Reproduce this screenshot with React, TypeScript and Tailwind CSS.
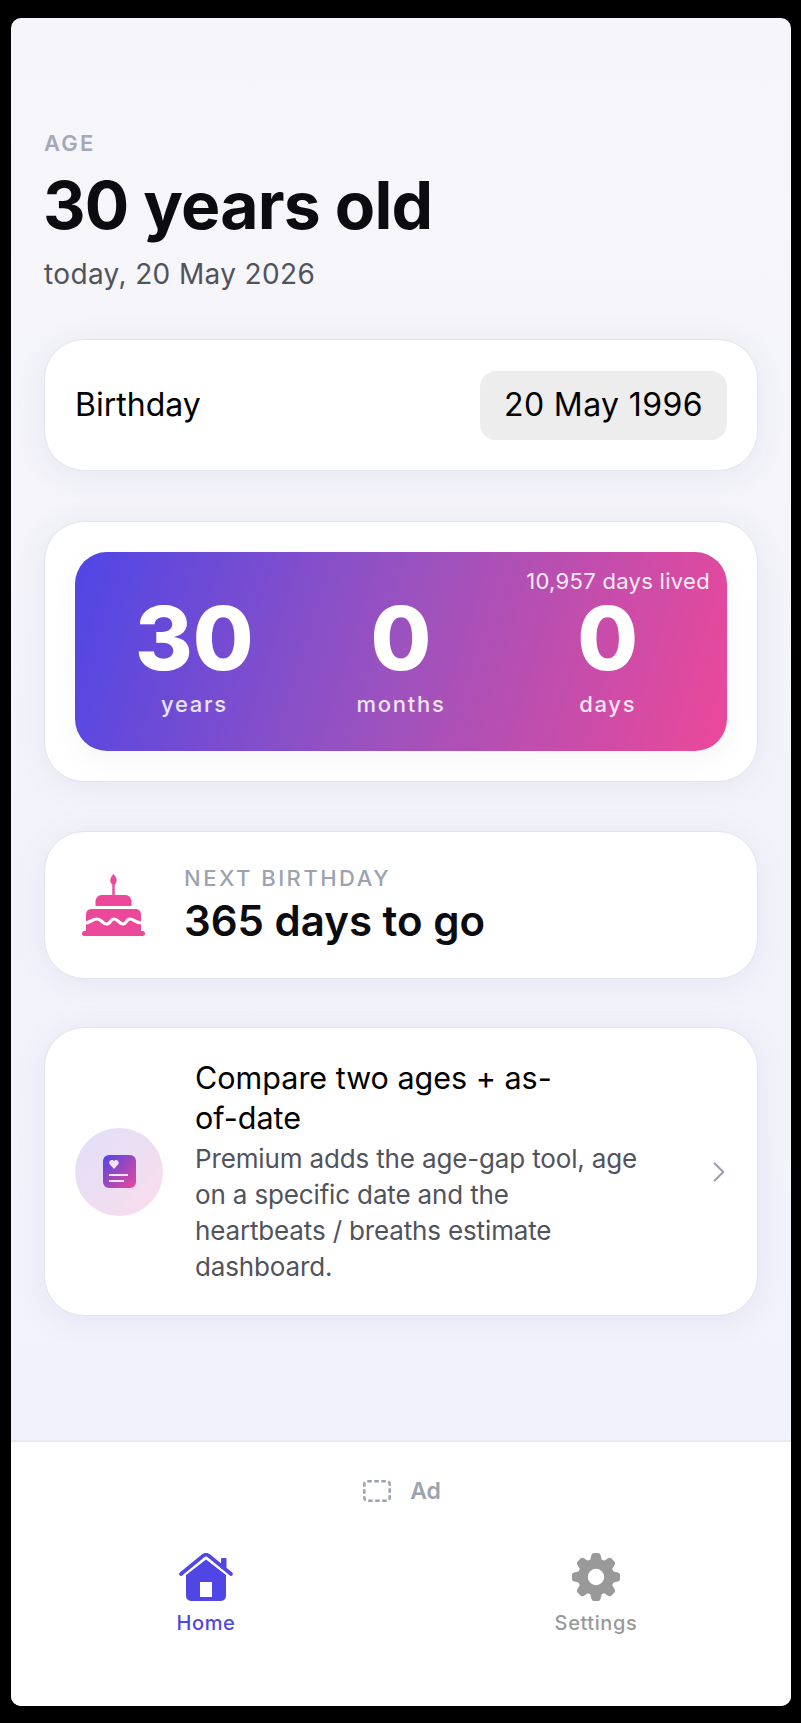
import React from "react";
import { ChevronRight } from "lucide-react";

function CakeIcon() {
  return (
    <svg width="63" height="62" viewBox="0 0 63 62" fill="#ec4899">
      <path d="M31.500 0c1.800 2 3.200 4 3.200 6.500 0 1.900-.8 3.200-2 3.700V21h-2.400V10.200c-1.200-.5-2-1.800-2-3.700C28.300 4 29.700 2 31.500 0z" />
      <path d="M13.500 32v-4c0-4 2.500-7 6-7h24c3.500 0 6 3 6 7v4z" />
      <path d="M4 58V41c0-4 2-6 6-6h43c4 0 6 2 6 6v17z" />
      <rect x="0" y="57" width="63" height="5" rx="2.500" />
      <path d="M3 49C8 49 10 45 15 45S20 50 24.500 50 28 45 32 45 37 50 41 50 44 45 48 45 53 49 60 49" fill="none" stroke="#ffffff" strokeWidth="3.200" />
    </svg>
  );
}

function HomeIcon() {
  return (
    <svg width="54" height="48" viewBox="0 0 54 48" fill="#4f46e5">
      <path d="M2 21 24.500 2.500Q27 .8 29.500 2.500L52 21" fill="none" stroke="#4f46e5" strokeWidth="3.600" strokeLinecap="round" />
      <rect x="42" y="5" width="5.500" height="11" rx="1" />
      <path fillRule="evenodd" d="M7 22 27 6.500 47 22V43a5 5 0 0 1-5 5H12a5 5 0 0 1-5-5zM21 29V44H33V29z" />
    </svg>
  );
}

function GearIcon() {
  return (
    <svg width="48" height="48" viewBox="0 0 24 24" fill="#999999">
      <circle cx="12" cy="12" r="6.600" fill="none" stroke="#999999" strokeWidth="5" />
      {[0, 45, 90, 135, 180, 225, 270, 315].map((a) => (
        <path key={a} transform={`rotate(${a} 12 12)`} d="M8.800 5 9.700 1.100Q9.900 0 11 0H13Q14.100 0 14.300 1.100L15.200 5z" />
      ))}
    </svg>
  );
}

export default function App() {
  return (
    <div className="h-[1723px] bg-black pt-[18px] pb-[17px] pl-[11px] pr-[10px] font-['Inter','Liberation_Sans',sans-serif]">
      <div className="h-full rounded-[10px] overflow-hidden flex flex-col bg-[linear-gradient(180deg,#f6f6fa,#f0f1fc)]">
        {/* 메인 */}
        <div className="flex-1 px-[33px] pt-[113px]">
          <div className="text-[22px] leading-[24px] tracking-[2.200px] font-semibold text-[#a3a9b5]">AGE</div>
          <h1 className="mt-[9px] -ml-[1px] text-[66px] leading-[82px] font-bold tracking-[-0.8px] text-[#0b0b10]">30 years old</h1>
          <p className="mt-[10px] text-[28px] leading-[36px] tracking-[0.370px] text-[#51535c]">today, 20 May 2026</p>

          <div className="mt-[47px] h-[132px] rounded-[40px] bg-white border border-[#e4e4ec] shadow-[0_4px_32px_rgba(60,60,120,0.08)] flex items-center justify-between px-[30px]">
            <span className="text-[32px] text-black">Birthday</span>
            <span className="h-[69px] w-[247px] rounded-[16px] bg-[#ededed] flex items-center justify-center text-[32px] tracking-[0.400px] text-black">20 May 1996</span>
          </div>

          <div className="mt-[50px] h-[261px] rounded-[40px] bg-white border border-[#e4e4ec] shadow-[0_4px_32px_rgba(60,60,120,0.08)] pt-[30px] px-[30px]">
            <div className="relative h-[199px] rounded-[32px] bg-[linear-gradient(107deg,#4f46e5,#9c52be_50%,#ec4899)] flex items-start pt-[42px] px-[16px] shadow-[0_10px_30px_rgba(0,0,0,0.04)]">
              <span className="absolute right-[17px] top-[16px] text-[22px] leading-[26px] tracking-[0.300px] text-white/90">10,957 days lived</span>
              {[
                ["30", "years"],
                ["0", "months"],
                ["0", "days"],
              ].map(([n, l]) => (
                <div key={l} className="flex-1 flex flex-col items-center text-white">
                  <span className="text-[88px] leading-[88px] font-extrabold">{n}</span>
                  <span className="mt-[8px] text-[22px] leading-[28px] font-medium tracking-[1.700px] text-white/85">{l}</span>
                </div>
              ))}
            </div>
          </div>

          <div className="mt-[49px] h-[148px] rounded-[40px] bg-white border border-[#e4e4ec] shadow-[0_4px_32px_rgba(60,60,120,0.08)] flex items-center pl-[37px]">
            <CakeIcon />
            <div className="ml-[39px]">
              <div className="text-[22px] leading-[28px] font-medium tracking-[2.500px] text-[#9ca3af]">NEXT BIRTHDAY</div>
              <div className="mt-[4px] text-[42px] leading-[50px] font-semibold text-[#0b0b10]">365 days to go</div>
            </div>
          </div>

          <div className="mt-[48px] h-[289px] rounded-[40px] bg-white border border-[#e4e4ec] shadow-[0_4px_32px_rgba(60,60,120,0.08)] flex items-center pl-[30px] pr-[21px]">
            <div className="w-[88px] h-[88px] rounded-full bg-[linear-gradient(135deg,#e0e0f9,#fadcec)] flex items-center justify-center shrink-0">
              <div className="w-[33px] h-[33px] rounded-[6px] bg-[linear-gradient(135deg,#4f46e5,#ec4899)] flex flex-col items-start pt-[5px] pl-[6px]">
                <svg width="10" height="9" viewBox="0 0 24 22" fill="#f3e3f5">
                  <path d="M12 22 2 11C-2 5 2 0 7 0c2 0 4 1 5 3 1-2 3-3 5-3 5 0 9 5 5 11z" />
                </svg>
                <div className="w-[19px] h-[2px] bg-[#f3e3f5] mt-[5px]" />
                <div className="w-[15px] h-[2px] bg-[#f3e3f5] mt-[4px]" />
              </div>
            </div>
            <div className="ml-[32px] flex-1">
              <div className="text-[30.500px] leading-[40px] text-black">
                Compare two ages + as-
                <br />
                of-date
              </div>
              <p className="mt-[3px] text-[26px] leading-[35.800px] tracking-[-0.150px] text-[#51535c]">
                Premium adds the age-gap tool, age
                <br />
                on a specific date and the
                <br />
                heartbeats / breaths estimate
                <br />
                dashboard.
              </p>
            </div>
            <ChevronRight size={34} strokeWidth={1.600} className="text-[#9ca3af]" />
          </div>
        </div>

        {/* 하단 영역 */}
        <div className="h-[266px] shrink-0 bg-white border-t-2 border-[#e9e9f1] flex flex-col">
          <div className="flex items-center justify-center h-[98px]">
            <svg width="28" height="22" viewBox="0 0 28 22" fill="none" stroke="#9ca3af" strokeWidth="2.600" className="mr-[19px] ml-[2px]">
              <rect x="1.300" y="1.300" width="25.400" height="19.400" rx="3" strokeDasharray="4.500 2.500" />
            </svg>
            <span className="text-[23px] font-semibold text-[#9ca3af]">Ad</span>
          </div>
          <div className="flex mt-[13px]">
            <div className="w-1/2 flex flex-col items-center text-[#4f46e5]">
              <HomeIcon />
              <span className="mt-[8px] text-[20px] leading-[28px] tracking-[0.600px] font-[450]">Home</span>
            </div>
            <div className="w-1/2 flex flex-col items-center text-[#999999]">
              <GearIcon />
              <span className="mt-[8px] text-[20px] leading-[28px] tracking-[0.600px] font-[450]">Settings</span>
            </div>
          </div>
        </div>
      </div>
    </div>
  );
}
